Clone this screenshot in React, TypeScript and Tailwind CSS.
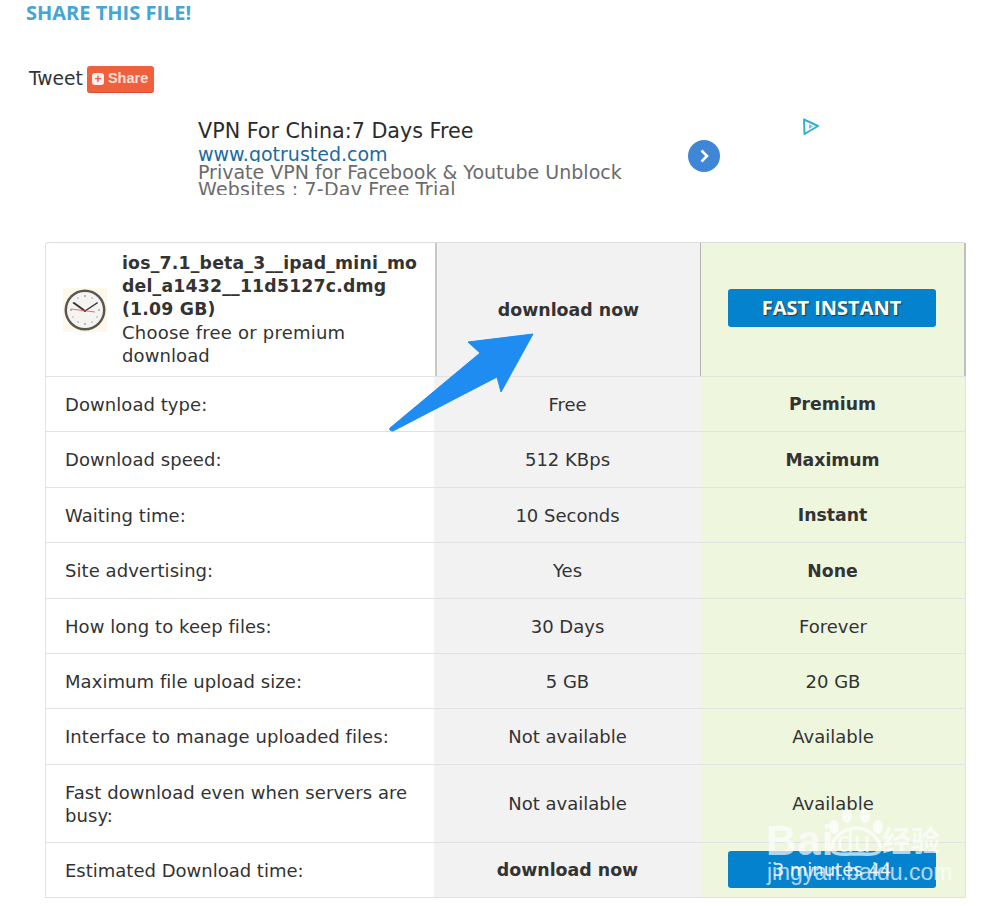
const font = { fontFamily: '"DejaVu Sans", sans-serif' };

const rows: { label: string[]; free: string; prem: string; premBold?: boolean; h: string }[] = [
  { label: ["Download type:"], free: "Free", prem: "Premium", premBold: true, h: "h-[55px]" },
  { label: ["Download speed:"], free: "512 KBps", prem: "Maximum", premBold: true, h: "h-[56px]" },
  { label: ["Waiting time:"], free: "10 Seconds", prem: "Instant", premBold: true, h: "h-[55px]" },
  { label: ["Site advertising:"], free: "Yes", prem: "None", premBold: true, h: "h-[56px]" },
  { label: ["How long to keep files:"], free: "30 Days", prem: "Forever", h: "h-[55px]" },
  { label: ["Maximum file upload size:"], free: "5 GB", prem: "20 GB", h: "h-[55px]" },
  { label: ["Interface to manage uploaded files:"], free: "Not available", prem: "Available", h: "h-[56px]" },
  { label: ["Fast download even when servers are", "busy:"], free: "Not available", prem: "Available", h: "h-[78px]" },
];

function Clock() {
  return (
    <svg width="44" height="44" viewBox="0 0 44 44" className="shrink-0">
      <rect width="44" height="44" fill="#fdf8ea" />
      <circle cx="22" cy="22" r="20.5" fill="#5a5751" />
      <circle cx="22" cy="22" r="18" fill="#f6f4f1" />
      <g fill="#a5a5a5">
        <circle cx="22" cy="8" r="1" /><circle cx="22" cy="36" r="1" /><circle cx="8" cy="22" r="1" /><circle cx="36" cy="22" r="1" />
        <circle cx="29" cy="10" r="0.8" /><circle cx="15" cy="10" r="0.8" /><circle cx="29" cy="34" r="0.8" /><circle cx="15" cy="34" r="0.8" />
        <circle cx="34" cy="15" r="0.8" /><circle cx="10" cy="15" r="0.8" /><circle cx="34" cy="29" r="0.8" /><circle cx="10" cy="29" r="0.8" />
      </g>
      <path d="M22 23 L11 15" stroke="#333" strokeWidth="2" strokeLinecap="round" />
      <path d="M22 23 L34 15" stroke="#333" strokeWidth="1.5" strokeLinecap="round" />
      <path d="M8 21 L32 24" stroke="#d9534f" strokeWidth="0.8" />
    </svg>
  );
}

export default function App() {
  return (
    <div className="relative w-[1000px] h-[906px] overflow-hidden bg-white text-[#333]" style={font}>
      <h2 className="pl-[26px] pt-[3px] h-[22px] text-[20px] leading-[20px] font-bold text-[#45a5d3]" style={{ fontFamily: '"Open Sans", sans-serif' }}>
        SHARE THIS FILE!
      </h2>

      <div className="flex items-center pl-[29px] mt-[44px] h-[27px]">
        <span className="text-[18.7px] leading-[20px] mb-[2px]">Tweet</span>
        <span className="ml-[4px] flex items-center gap-[4px] w-[67px] h-[27px] px-[5px] rounded-[3px] bg-[#f0603c] border-b border-[#d94f2e] text-white/80 text-[14.5px] font-bold" style={{ fontFamily: '"Liberation Sans", sans-serif' }}>
          <span className="flex items-center justify-center w-[12px] h-[12px] rounded-[3px] bg-white/90 text-[#f0603c] text-[12px] leading-none">+</span>
          Share
        </span>
      </div>

      <div className="relative flex pl-[198px] mt-[26px] h-[124px]">
        <div className="w-[440px]">
          <div className="text-[20.7px] leading-[24px] h-[24px] whitespace-nowrap text-[#2b2b2b]">VPN For China:7 Days Free</div>
          <div className="text-[19px] leading-[19px] h-[17px] overflow-hidden mt-[2px] whitespace-nowrap text-[#1c6aa0]">www.gotrusted.com</div>
          <div className="text-[19px] leading-[19px] h-[17px] overflow-hidden mt-[1px] whitespace-nowrap text-[#6b6b6b]">Private VPN for Facebook &amp; Youtube Unblock</div>
          <div className="text-[19px] leading-[19px] h-[15px] overflow-hidden mt-[0px] whitespace-nowrap tracking-[0.22px] text-[#6b6b6b]">Websites : 7-Dav Free Trial</div>
        </div>
        <div className="ml-[50px] mt-[21px] w-[32px] h-[32px] rounded-full bg-[#3f87d6] flex items-center justify-center">
          <svg width="14" height="16" viewBox="0 0 14 16" fill="none">
            <path d="M4.5 2.5 L10 8 L4.5 13.5" stroke="#fff" strokeWidth="2.6" />
          </svg>
        </div>
        <svg className="absolute left-[802px] top-[-1px]" width="18" height="18" viewBox="0 0 18 18" fill="none">
          <path d="M2 1.5 L16 8 L2.5 16 Z" stroke="#35b1cf" strokeWidth="2" strokeLinejoin="round" />
          <path d="M7 6 L11 8.5 L7 11 Z" fill="#35b1cf" opacity="0.7" />
        </svg>
      </div>

      <div className="ml-[45px] w-[921px] mt-[-1px] border-t border-[#dcdcdc] rounded-t-[4px] text-[18px]">
        <div className="grid grid-cols-[392px_264px_265px] h-[134px] border-b border-[#e2e2e2]">
          <div className="flex items-center border-l border-[#e2e2e2] border-r-2 border-r-[#c8c8c8] pl-[17px] pr-[10px]">
            <Clock />
            <div className="ml-[15px] text-[18px] leading-[23px]">
              <div className="font-bold text-[17.3px] tracking-[0.2px] whitespace-nowrap">
                <div>ios_7.1_beta_3__ipad_mini_mo</div>
                <div>del_a1432__11d5127c.dmg</div>
                <div>(1.09 GB)</div>
              </div>
              <div className="tracking-[0.22px]">Choose free or premium</div>
              <div className="tracking-[0.1px]">download</div>
            </div>
          </div>
          <div className="flex items-center justify-center bg-[#f2f2f2] font-bold text-[17.4px] pt-[1px] border-r border-r-[#b5b5b5]">download now</div>
          <div className="flex items-center justify-center bg-[#eef6de] border-r-2 border-r-[#c0c0c0] pb-[4px] pr-[2px]">
            <div className="w-[208px] h-[38px] rounded-[3px] bg-[#0482ce] flex items-center justify-center text-white text-[20px] font-bold" style={{ fontFamily: '"Open Sans", sans-serif', textShadow: "1px 1px 1px #333" }}>
              FAST INSTANT
            </div>
          </div>
        </div>

        {rows.map((r) => (
          <div key={r.label[0]} className={`grid grid-cols-[389px_267px_265px] ${r.h} border-b border-[#e2e2e2] leading-[23px]`}>
            <div className="flex flex-col justify-center border-l border-[#e2e2e2] pl-[19px] tracking-[0.06px]">
              {r.label.map((l) => (
                <div key={l} className="whitespace-nowrap">{l}</div>
              ))}
            </div>
            <div className="flex items-center justify-center bg-[#f2f2f2]">{r.free}</div>
            <div className={`flex items-center justify-center bg-[#eef6de] border-r border-[#e2e2e2] ${r.premBold ? "font-bold text-[17.3px] pt-[1px] pr-[1px]" : ""}`}>{r.prem}</div>
          </div>
        ))}

        <div className="grid grid-cols-[389px_267px_265px] h-[55px] border-b border-[#e2e2e2]">
          <div className="flex items-center border-l border-[#e2e2e2] pl-[19px] whitespace-nowrap">Estimated Download time:</div>
          <div className="flex items-center justify-center bg-[#f2f2f2] font-bold text-[17.4px] pt-[1px]">download now</div>
          <div className="flex items-start justify-center bg-[#eef6de] border-r border-[#e2e2e2] pt-[8px] pr-[2px]">
            <div className="w-[208px] h-[37px] rounded-[3px] bg-[#0482ce] flex items-center justify-center text-[#e8eef2]">3 minutes 44</div>
          </div>
        </div>
      </div>

      {/* annotation arrow */}
      <svg className="absolute left-[385px] top-[330px]" width="155" height="105" viewBox="0 0 155 105">
        <path d="M5 98 L95 23 L83 12 L148 4 L116 62 L112 47 L8 101 Q4 101 5 98 Z" fill="#1e8cf0" stroke="#1e8cf0" strokeWidth="1" strokeLinejoin="round" />
      </svg>

      {/* watermark */}
      <div className="absolute left-[766px] top-[800px] w-[234px] h-[90px] text-white/70 pointer-events-none">
        <div className="absolute left-[0px] top-[17px] text-[42px] leading-[48px] font-bold tracking-[1px]" style={{ fontFamily: '"Liberation Sans", sans-serif' }}>Bai</div>
        <div className="absolute left-[71px] top-[24px] text-[30px] leading-[36px]" style={{ fontFamily: '"Liberation Sans", sans-serif' }}>du</div>
        <svg className="absolute left-[62px] top-[8px]" width="60" height="50" viewBox="0 0 60 50" fill="none">
          <ellipse cx="6" cy="19" rx="5" ry="7" fill="currentColor" />
          <ellipse cx="19" cy="8" rx="5" ry="7" fill="currentColor" />
          <ellipse cx="37" cy="8" rx="5" ry="7" fill="currentColor" />
          <ellipse cx="50" cy="19" rx="5" ry="7" fill="currentColor" />
          <path d="M4 40 C4 28 18 20 28 20 C40 20 52 30 52 40 C52 48 40 46 28 46 C16 46 4 48 4 40 Z" stroke="currentColor" strokeWidth="3.5" />
        </svg>
        <div className="absolute left-[116px] top-[21px] text-[29px] leading-[36px] font-bold" style={{ fontFamily: '"Noto Sans CJK SC", sans-serif' }}>经验</div>
        <div className="absolute left-[1px] top-[59px] text-[23px] leading-[26px] whitespace-nowrap" style={{ fontFamily: '"Liberation Sans", sans-serif' }}>jingyan.baidu.com</div>
      </div>
    </div>
  );
}
